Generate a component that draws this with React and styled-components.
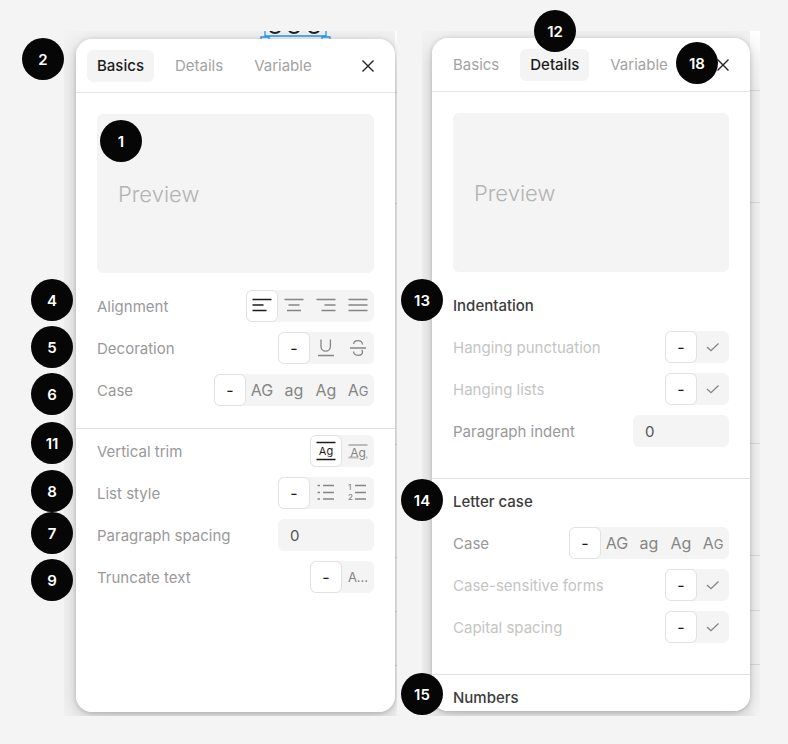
import React, { useState } from "react";
import styled, { createGlobalStyle } from "styled-components";

const GlobalStyle = createGlobalStyle`
  * {
    box-sizing: border-box;
  }
  body {
    margin: 0;
    background-color: #f4f4f4;
    font-family: Inter, "Liberation Sans", sans-serif;
  }
  button, input {
    font-family: inherit;
  }
`;

const StyledPage = styled.main`
  position: relative;
  display: grid;
  grid-template-columns: 333fr 338fr;
  column-gap: 25px;
  height: 100vh;
  min-height: 744px;
  padding: 31px 28px 28px 64px;
`;

const StyledShot = styled.section`
  position: relative;
  display: flex;
  overflow: hidden;
  padding: ${(props) => props.$padding};
  background-color: #f2f2f2;
`;

const StyledEdge = styled.div`
  position: absolute;
  top: 0;
  right: 0;
  bottom: 0;
  width: ${(props) => props.$width}px;
  background: linear-gradient(#fff, #f6f6f6 60px);
  border-bottom-left-radius: 12px;
`;

const StyledTick = styled.div`
  position: absolute;
  left: 0;
  right: 0;
  top: ${(props) => props.$top}px;
  height: 1px;
  background-color: #dcdcdc;
`;

const StyledSelection = styled.svg`
  position: absolute;
  top: 0;
  left: 196px;
`;

const StyledPanel = styled.div`
  position: relative;
  flex: 1;
  overflow: hidden;
  border-radius: 16px;
  background-color: #fff;
`;

const StyledShadow = styled.div`
  position: relative;
  display: flex;
  flex: 1;
  border-radius: 16px;
  box-shadow: 0 6px 20px rgba(0, 0, 0, 0.18), 0 1px 5px rgba(0, 0, 0, 0.18);
`;

const StyledHeader = styled.header`
  display: flex;
  align-items: center;
  height: 54px;
  padding: 0 16px 0 11px;
  border-bottom: 1px solid #e6e6e6;
`;

const StyledTabs = styled.div`
  display: flex;
  flex: 1;
  gap: 11px;
`;

const StyledTab = styled.button`
  height: 32px;
  padding: 0 10px;
  border: 0;
  border-radius: 6px;
  font-size: 15px;
  font-weight: ${(props) => (props.$active ? 500 : 400)};
  color: ${(props) => (props.$active ? "#1c1c1c" : "#a3a3a3")};
  background-color: ${(props) => (props.$active ? "#f4f4f4" : "transparent")};
  &:hover {
    cursor: pointer;
  }
`;

const StyledClose = styled.button`
  display: flex;
  padding: 4px;
  border: 0;
  background: none;
`;

const StyledPreview = styled.div`
  display: flex;
  align-items: center;
  height: 159px;
  margin: 21px 21px 17px;
  padding: 0 21px;
  border-radius: 6px;
  font-size: 22px;
  font-weight: 300;
  color: #b3b3b3;
  background-color: #f4f4f4;
`;

const StyledSection = styled.div`
  display: flex;
  flex-direction: column;
  gap: 10px;
  padding: ${(props) => (props.$first ? 0 : 6)}px 21px
    ${(props) => props.$bottom}px;
  & + & {
    border-top: 1px solid #e0e0e0;
  }
`;

const StyledRow = styled.div`
  display: flex;
  align-items: center;
  justify-content: space-between;
  height: 32px;
`;

const StyledLabel = styled.label`
  font-size: 15px;
  color: ${(props) => (props.$muted ? "#c4c4c4" : "#999")};
`;

const StyledHeading = styled.h2`
  margin: 0;
  font-size: 15px;
  font-weight: 500;
  color: #3c3c3c;
`;

const StyledSegments = styled.div`
  display: flex;
  border-radius: 6px;
  background-color: #f4f4f4;
`;

const StyledSegment = styled.button`
  display: flex;
  align-items: center;
  justify-content: center;
  width: 32px;
  height: 32px;
  padding: 0;
  border: 1px solid ${(props) => (props.$active ? "#e2e2e2" : "transparent")};
  border-radius: 6px;
  font-size: 16px;
  color: ${(props) => (props.$active ? "#1c1c1c" : "#858585")};
  background-color: ${(props) => (props.$active ? "#fff" : "transparent")};
  &:hover {
    cursor: pointer;
  }
`;

const StyledInput = styled.input`
  width: 96px;
  height: 32px;
  padding: 0 12px;
  border: 0;
  border-radius: 6px;
  font-size: 15px;
  color: #555;
  background-color: #f4f4f4;
`;

const StyledBadge = styled.span`
  position: absolute;
  left: ${(props) => props.$x}px;
  top: ${(props) => props.$y}px;
  display: flex;
  align-items: center;
  justify-content: center;
  width: 42px;
  height: 42px;
  border-radius: 50%;
  font-size: 15px;
  font-weight: 600;
  color: #fff;
  background-color: #060606;
`;

const Icon = ({ children }) => (
  <svg
    width="24"
    height="24"
    viewBox="0 0 24 24"
    fill="none"
    stroke="currentColor"
    strokeWidth="1.3"
  >
    {children}
  </svg>
);

const lines = (d) => (
  <Icon>
    <path d={d} />
  </Icon>
);

const iconText = {
  fill: "currentColor",
  stroke: "none",
};

const check = (
  <Icon>
    <path d="M6 12l4 3.7 7.5-7.2" />
  </Icon>
);

const alignOptions = [
  lines("M2.5 5.5h19M2.5 11h11M2.5 16.5h14"),
  lines("M2.5 5.5h19M6.5 11h11M5 16.5h14"),
  lines("M2.5 5.5h19M10.5 11h11M7.5 16.5h14"),
  lines("M2.5 5.5h19M2.5 11h19M2.5 16.5h19"),
];

const decorationOptions = [
  "-",
  <Icon>
    <path d="M7 3.5v7a4.7 4.7 0 0 0 9.4 0v-7M4 19.5h16" />
  </Icon>,
  <Icon>
    <path d="M4 12h16M16.5 8.5c-.3-2.4-2-3.8-4.5-3.8s-4.3 1.3-4.3 3.3M7.5 15.5c.3 2.4 2 3.8 4.5 3.8s4.5-1.3 4.5-3.3c0-1-.3-1.5-.8-2" />
  </Icon>,
];

const StyledSmallText = styled.span`
  font-size: 13px;
`;

const caseOptions = [
  "-",
  "AG",
  "ag",
  "Ag",
  <span>
    A<StyledSmallText>G</StyledSmallText>
  </span>,
];

const trimOptions = [
  <Icon>
    <path d="M2.5 3.5h19M2.5 20.5h19" />
    <text x="12" y="16" fontSize="11" textAnchor="middle" {...iconText}>
      Ag
    </text>
  </Icon>,
  <Icon>
    <path
      d="M2.5 6h19M2.5 18.5h10M20 18.5h1.500"
      stroke="#bbb"
      strokeWidth="2"
    />
    <text x="12" y="18" fontSize="12" textAnchor="middle" {...iconText}>
      Ag
    </text>
  </Icon>,
];

const listOptions = [
  "-",
  <Icon>
    <path d="M9 4.5h11M9 11.500h11M9 18h11M3.500 4.500h2.500M3.500 11.500h2.500M3.500 18h2.500" />
  </Icon>,
  <Icon>
    <path d="M9 4.500h11M9 11.500h11M9 18h11" />
    <text x="2" y="9" fontSize="8" fontWeight="500" {...iconText}>
      1
    </text>
    <text x="2" y="19" fontSize="8" fontWeight="500" {...iconText}>
      2
    </text>
  </Icon>,
];

const truncateOptions = ["-", <StyledSmallText>A...</StyledSmallText>];
const toggleOptions = ["-", check];

const badges = [
  { n: 2, x: 22, y: 38 },
  { n: 1, x: 100, y: 120 },
  { n: 4, x: 31, y: 279 },
  { n: 5, x: 31, y: 326 },
  { n: 6, x: 31, y: 373 },
  { n: 11, x: 31, y: 422 },
  { n: 8, x: 31, y: 470 },
  { n: 7, x: 31, y: 512 },
  { n: 9, x: 31, y: 559 },
  { n: 12, x: 534, y: 10 },
  { n: 18, x: 676, y: 42 },
  { n: 13, x: 401, y: 279 },
  { n: 14, x: 401, y: 479 },
  { n: 15, x: 401, y: 673 },
];

function Segments({ label, options, muted }) {
  const [selected, setSelected] = useState(0);
  const id = React.useId();

  return (
    <StyledRow>
      <StyledLabel as="span" id={id} $muted={muted}>
        {label}
      </StyledLabel>
      <StyledSegments role="group" aria-labelledby={id}>
        {options.map((option, i) => (
          <StyledSegment
            key={i}
            type="button"
            $active={i === selected}
            aria-pressed={i === selected}
            onClick={() => setSelected(i)}
          >
            {option}
          </StyledSegment>
        ))}
      </StyledSegments>
    </StyledRow>
  );
}

function NumberField({ label }) {
  const id = React.useId();

  return (
    <StyledRow>
      <StyledLabel htmlFor={id}>{label}</StyledLabel>
      <StyledInput id={id} type="text" defaultValue="0" />
    </StyledRow>
  );
}

function Heading({ children }) {
  return (
    <StyledRow>
      <StyledHeading>{children}</StyledHeading>
    </StyledRow>
  );
}

function Panel({ active, children }) {
  return (
    <StyledShadow>
      <StyledPanel>
        <StyledHeader>
          <StyledTabs>
            {["Basics", "Details", "Variable"].map((tab) => (
              <StyledTab key={tab} type="button" $active={tab === active}>
                {tab}
              </StyledTab>
            ))}
          </StyledTabs>
          <StyledClose type="button" aria-label="Close">
            <svg width="14" height="14" viewBox="0 0 14 14" stroke="#222">
              <path d="M1.500 1.500l11 11M12.500 1.500l-11 11" strokeWidth="1.400" />
            </svg>
          </StyledClose>
        </StyledHeader>
        <StyledPreview>Preview</StyledPreview>
        {children}
      </StyledPanel>
    </StyledShadow>
  );
}

function App() {
  return (
    <StyledPage>
      <GlobalStyle />
      <StyledShot $padding="8px 2px 4px 12px">
        <StyledEdge $width={2}>
          {[61, 172, 413, 526, 580, 634].map((top) => (
            <StyledTick key={top} $top={top} />
          ))}
        </StyledEdge>
        <StyledSelection width="72" height="12" viewBox="0 0 72 12" fill="none">
          <path
            d="M10 0q5 4 10 0M29 0q5 4 10 0M49 0q5 4 10 0"
            stroke="#222"
            strokeWidth="2"
          />
          <path
            d="M5 0v5h61V0M1 12V6h8v6M62 12V6h8v6"
            stroke="#1e9bf5"
            strokeWidth="1.300"
          />
        </StyledSelection>
        <Panel active="Basics">
          <StyledSection $first $bottom={22}>
            <Segments label="Alignment" options={alignOptions} />
            <Segments label="Decoration" options={decorationOptions} />
            <Segments label="Case" options={caseOptions} />
          </StyledSection>
          <StyledSection $bottom={22}>
            <Segments label="Vertical trim" options={trimOptions} />
            <Segments label="List style" options={listOptions} />
            <NumberField label="Paragraph spacing" />
            <Segments label="Truncate text" options={truncateOptions} />
          </StyledSection>
        </Panel>
      </StyledShot>
      <StyledShot $padding="7px 10px 5px 10px">
        <StyledEdge $width={10}>
          {[59, 171, 412, 524, 579, 633].map((top) => (
            <StyledTick key={top} $top={top} />
          ))}
        </StyledEdge>
        <Panel active="Details">
          <StyledSection $first $bottom={31}>
            <Heading>Indentation</Heading>
            <Segments label="Hanging punctuation" options={toggleOptions} muted />
            <Segments label="Hanging lists" options={toggleOptions} muted />
            <NumberField label="Paragraph indent" />
          </StyledSection>
          <StyledSection $bottom={31}>
            <Heading>Letter case</Heading>
            <Segments label="Case" options={caseOptions} />
            <Segments label="Case-sensitive forms" options={toggleOptions} muted />
            <Segments label="Capital spacing" options={toggleOptions} muted />
          </StyledSection>
          <StyledSection $bottom={0}>
            <Heading>Numbers</Heading>
          </StyledSection>
        </Panel>
      </StyledShot>
      {badges.map((badge) => (
        <StyledBadge key={badge.n} $x={badge.x} $y={badge.y}>
          {badge.n}
        </StyledBadge>
      ))}
    </StyledPage>
  );
}

export default App;
